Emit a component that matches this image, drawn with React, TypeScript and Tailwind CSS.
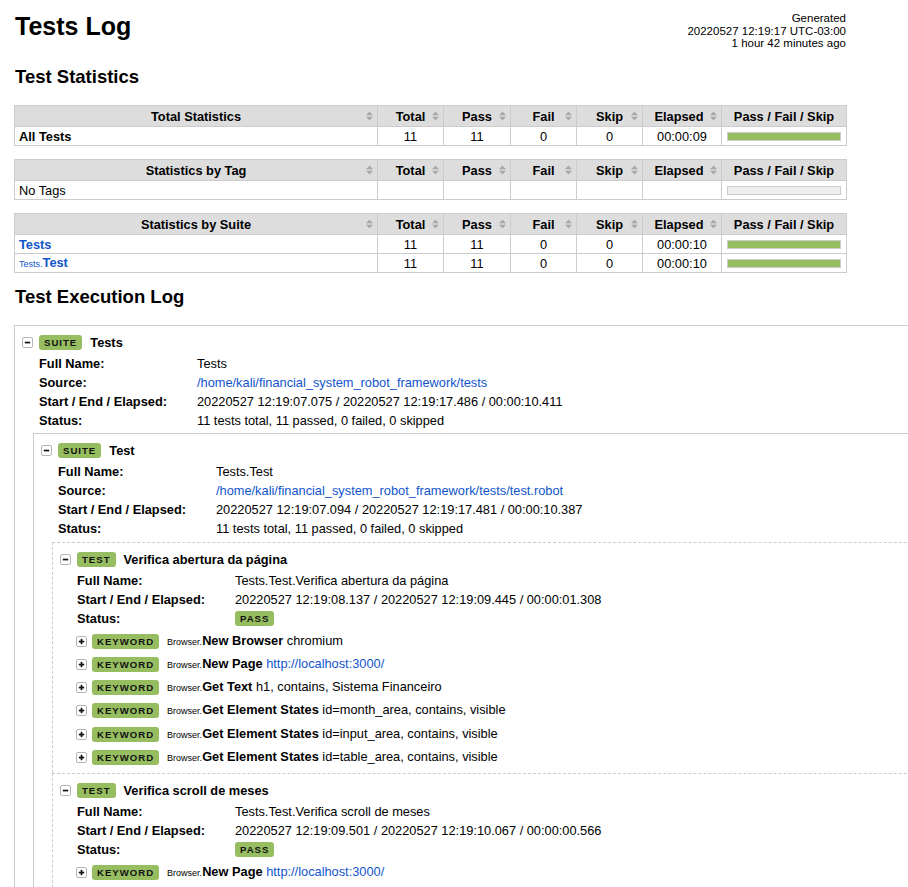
import React from "react";

const GREEN = "bg-[#97bd61]";

function SortArrow() {
  return (
    <svg className="absolute right-[4px] top-1/2 -translate-y-1/2" width="7" height="9" viewBox="0 0 7 9">
      <path d="M0 3.8 L3.5 0 L7 3.8 Z M0 5.2 L3.5 9 L7 5.2 Z" fill="#a8a8a8" />
    </svg>
  );
}

function Toggle({ open }: { open: boolean }) {
  return (
    <svg width="11" height="11" viewBox="0 0 11 11" className="shrink-0">
      <rect x="0.5" y="0.5" width="10" height="10" rx="1.5" fill="#fff" stroke="#b5b5b5" />
      <rect x="2.8" y="4.7" width="5.4" height="1.7" fill="#111" />
      {!open && <rect x="4.65" y="2.8" width="1.7" height="5.4" fill="#111" />}
    </svg>
  );
}

function Label({ text }: { text: string }) {
  return (
    <span className={`${GREEN} inline-block rounded-[3px] px-[5px] py-[2px] text-[9.6px] font-bold leading-[11px] tracking-[1px] text-[#111]`}>
      {text}
    </span>
  );
}

function Graph({ empty }: { empty?: boolean }) {
  return (
    <div className={`mx-auto h-[9px] w-[114px] border border-[#cccccc] ${empty ? "bg-[#eeeeee]" : GREEN}`} />
  );
}

type Row = { name: React.ReactNode; total: string; pass: string; fail: string; skip: string; elapsed: string; empty?: boolean };

function StatTable({ title, rows }: { title: string; rows: Row[] }) {
  const th = "relative h-[21px] border border-[#cccccc] bg-[#dddddd] p-0 text-center font-bold";
  const td = "h-[19px] border border-[#cccccc] p-0 text-center";
  return (
    <table className="w-[832px] table-fixed border-collapse leading-[15px]">
      <colgroup>
        <col className="w-[363px]" />
        <col className="w-[66px]" />
        <col className="w-[67px]" />
        <col className="w-[66px]" />
        <col className="w-[66px]" />
        <col className="w-[79px]" />
        <col className="w-[125px]" />
      </colgroup>
      <thead>
        <tr>
          <th className={th}>{title}<SortArrow /></th>
          <th className={th}>Total<SortArrow /></th>
          <th className={th}>Pass<SortArrow /></th>
          <th className={th}>Fail<SortArrow /></th>
          <th className={th}>Skip<SortArrow /></th>
          <th className={th}><span className="pr-[6px]">Elapsed</span><SortArrow /></th>
          <th className={th}>Pass / Fail / Skip</th>
        </tr>
      </thead>
      <tbody>
        {rows.map((r, i) => (
          <tr key={i}>
            <td className={`${td} px-[4px] text-left`}>{r.name}</td>
            <td className={td}>{r.total}</td>
            <td className={td}>{r.pass}</td>
            <td className={td}>{r.fail}</td>
            <td className={td}>{r.skip}</td>
            <td className={td}>{r.elapsed}</td>
            <td className={td}><Graph empty={r.empty} /></td>
          </tr>
        ))}
      </tbody>
    </table>
  );
}

function Meta({ rows }: { rows: [string, React.ReactNode][] }) {
  return (
    <div className="ml-[17px] mt-[1px] grid grid-cols-[158px_1fr]">
      {rows.map(([k, v]) => (
        <React.Fragment key={k}>
          <div className="flex h-[19px] items-center font-bold">{k}</div>
          <div className="flex h-[19px] items-center whitespace-nowrap">{v}</div>
        </React.Fragment>
      ))}
    </div>
  );
}

function Header({ label, name }: { label: string; name: string }) {
  return (
    <div className="flex h-[21px] items-center">
      <Toggle open />
      <span className="ml-[6px] flex"><Label text={label} /></span>
      <span className="ml-[8px] font-bold">{name}</span>
    </div>
  );
}

function Keyword({ name, args, link }: { name: string; args?: string; link?: string }) {
  return (
    <div className="flex h-[23.2px] items-center whitespace-nowrap pl-[5px]">
      <Toggle open={false} />
      <span className="ml-[5px] flex"><Label text="KEYWORD" /></span>
      <span className="ml-[8px]">
        <span className="text-[9px]">Browser.</span>
        <span className="font-bold">{name}</span>
        {args && <span> {args}</span>}
        {link && (
          <>
            {" "}
            <a className="text-[#1155cc]">{link}</a>
          </>
        )}
      </span>
    </div>
  );
}

const Link = ({ children }: { children: React.ReactNode }) => <a className="text-[#1155cc]">{children}</a>;

export default function App() {
  return (
    <div className="h-[887px] w-[908px] overflow-hidden bg-white font-['Liberation_Sans',Arial,sans-serif] text-[12.8px] leading-[15px] text-black">
      <div className="pl-[14px]">
        <div className="flex w-[832px] items-start justify-between pt-[11px]">
          <h1 className="mt-[1px] pl-[1px] text-[25px] font-bold leading-[29px]">Tests Log</h1>
          <div className="mt-[1px] text-right text-[11.5px] leading-[12.6px]">
            <div>Generated</div>
            <div>20220527 12:19:17 UTC-03:00</div>
            <div>1 hour 42 minutes ago</div>
          </div>
        </div>

        <h2 className="mt-[16.5px] pl-[1px] text-[18.5px] font-bold leading-[22px]">Test Statistics</h2>

        <div className="mt-[17px] flex flex-col gap-[13px]">
          <StatTable
            title="Total Statistics"
            rows={[{ name: <span className="font-bold">All Tests</span>, total: "11", pass: "11", fail: "0", skip: "0", elapsed: "00:00:09" }]}
          />
          <StatTable
            title="Statistics by Tag"
            rows={[{ name: "No Tags", total: "", pass: "", fail: "", skip: "", elapsed: "", empty: true }]}
          />
          <StatTable
            title="Statistics by Suite"
            rows={[
              { name: <a className="font-bold text-[#1155cc]">Tests</a>, total: "11", pass: "11", fail: "0", skip: "0", elapsed: "00:00:10" },
              {
                name: (
                  <a className="text-[#1155cc]">
                    <span className="text-[9px]">Tests.</span>
                    <span className="font-bold">Test</span>
                  </a>
                ),
                total: "11",
                pass: "11",
                fail: "0",
                skip: "0",
                elapsed: "00:00:10",
              },
            ]}
          />
        </div>

        <h2 className="mt-[12.5px] pl-[1px] text-[18.5px] font-bold leading-[22px]">Test Execution Log</h2>

        {/* Outer suite */}
        <div className="mt-[17px] w-[1000px] border border-[#cccccc] pl-[7px] pt-[6px]">
          <Header label="SUITE" name="Tests" />
          <Meta
            rows={[
              ["Full Name:", "Tests"],
              ["Source:", <Link>/home/kali/financial_system_robot_framework/tests</Link>],
              ["Start / End / Elapsed:", "20220527 12:19:07.075 / 20220527 12:19:17.486 / 00:00:10.411"],
              ["Status:", "11 tests total, 11 passed, 0 failed, 0 skipped"],
            ]}
          />

          {/* Child suite */}
          <div className="ml-[11px] mt-[3px] border border-[#cccccc] pl-[7px] pt-[6px]">
            <Header label="SUITE" name="Test" />
            <Meta
              rows={[
                ["Full Name:", "Tests.Test"],
                ["Source:", <Link>/home/kali/financial_system_robot_framework/tests/test.robot</Link>],
                ["Start / End / Elapsed:", "20220527 12:19:07.094 / 20220527 12:19:17.481 / 00:00:10.387"],
                ["Status:", "11 tests total, 11 passed, 0 failed, 0 skipped"],
              ]}
            />

            <div className="ml-[11px] mt-[4px]">
              {/* Test 1 */}
              <div className="border-l border-t border-dashed border-[#cccccc] pb-[4px] pl-[7px] pt-[6px]">
                <Header label="TEST" name="Verifica abertura da página" />
                <Meta
                  rows={[
                    ["Full Name:", "Tests.Test.Verifica abertura da página"],
                    ["Start / End / Elapsed:", "20220527 12:19:08.137 / 20220527 12:19:09.445 / 00:00:01.308"],
                    ["Status:", <Label text="PASS" />],
                  ]}
                />
                <div className="ml-[11px] mt-[2px]">
                  <Keyword name="New Browser" args="chromium" />
                  <Keyword name="New Page" link="http://localhost:3000/" />
                  <Keyword name="Get Text" args="h1, contains, Sistema Financeiro" />
                  <Keyword name="Get Element States" args="id=month_area, contains, visible" />
                  <Keyword name="Get Element States" args="id=input_area, contains, visible" />
                  <Keyword name="Get Element States" args="id=table_area, contains, visible" />
                </div>
              </div>

              {/* Test 2 */}
              <div className="border-l border-t border-dashed border-[#cccccc] pb-[4px] pl-[7px] pt-[6px]">
                <Header label="TEST" name="Verifica scroll de meses" />
                <Meta
                  rows={[
                    ["Full Name:", "Tests.Test.Verifica scroll de meses"],
                    ["Start / End / Elapsed:", "20220527 12:19:09.501 / 20220527 12:19:10.067 / 00:00:00.566"],
                    ["Status:", <Label text="PASS" />],
                  ]}
                />
                <div className="ml-[11px] mt-[2px]">
                  <Keyword name="New Page" link="http://localhost:3000/" />
                </div>
              </div>
            </div>
          </div>
        </div>
      </div>
    </div>
  );
}
